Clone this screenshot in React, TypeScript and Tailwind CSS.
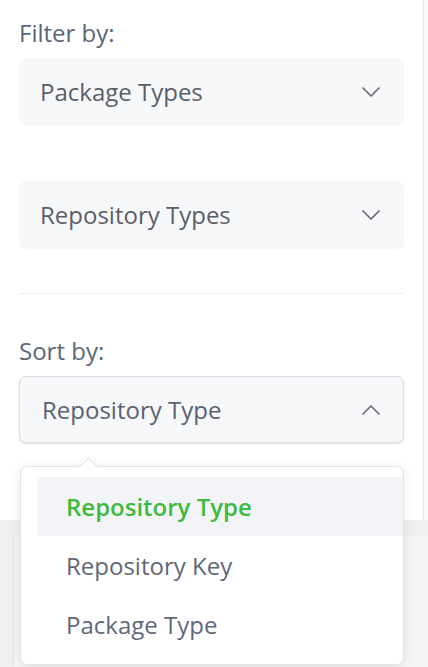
import React from 'react';

type Opt = { key: string; label: string }

const sortOptions: Opt[] = [
  { key: 'type', label: 'Repository Type' },
  { key: 'key', label: 'Repository Key' },
  { key: 'pkg', label: 'Package Type' },
]

// chevron drawn by hand, lucide one is too bold here
const Chevron = ({ up = false }: { up?: boolean }) => (
  <svg width="18" height="10" viewBox="0 0 18 10" fill="none" className="shrink-0">
    <path d={up ? 'M1 9l8-8 8 8' : 'M1 1l8 8 8-8'} stroke="#6a6d73" strokeWidth="1.7" strokeLinecap="round" strokeLinejoin="round" />
  </svg>
)

const FilterSelect = ({ label }: { label: string }) => (
  <button className="flex h-[68px] w-full items-center justify-between rounded-[7px] bg-[#f7f8fa] pl-[21px] pr-[24px] text-left text-[24px] text-[#5b5f68]">
    <span>{label}</span>
    <Chevron />
  </button>
)

export default function App() {
  const [selected, setSelected] = React.useState('type')
  const current = sortOptions.find(o => o.key === selected)

  return (
    <div className="relative h-[667px] w-[428px] overflow-hidden bg-[#f0f0f0] font-['Open_Sans',sans-serif]">
      <div className="flex h-[520px]">
        <aside className="flex w-[424px] flex-col border-r border-[#e4e4e4] bg-white px-[19px] pt-[18px]">
          <p className="mb-[10px] text-[24px] leading-[30px] text-[#5b6676]">Filter by:</p>
          <FilterSelect label="Package Types" />
          <div className="mt-[55px]">
            <FilterSelect label="Repository Types" />
          </div>
          <div className="mt-[44px] h-px w-[385px] bg-[#eceef1]" />

          <p className="mt-[42px] mb-[10px] text-[24px] leading-[30px] text-[#5b6676]">Sort by:</p>
          <div className="relative">
            <button className="flex h-[67px] w-[385px] items-center justify-between rounded-[7px] border border-[#dadde3] bg-[#f7f8fa] pl-[22px] pr-[23px] text-left text-[24px] text-[#5b6270] shadow-[0_1px_2px_rgba(0,0,0,0.12)]">
              <span>{current?.label}</span>
              <Chevron up />
            </button>

            {/* open menu */}
            <div className="absolute left-[1px] top-[90px] z-10 w-[384px] rounded-[7px] border border-[#e3e5ea] bg-white pt-[10px] pb-[10px] pl-[16px] shadow-[0_2px_14px_rgba(0,0,0,0.08)]">
              <div className="absolute left-[61px] top-[-7px] h-[13px] w-[13px] rotate-45 border-l border-t border-[#e3e5ea] bg-white" />
              {sortOptions.map(o => (
                <div
                  key={o.key}
                  onClick={() => setSelected(o.key)}
                  className={`relative flex h-[59px] cursor-pointer items-center pl-[29px] text-[24px] ${o.key === selected ? 'bg-[#f3f4f7] font-semibold text-[#3dba3f]' : 'text-[#5f6878]'}`}
                >
                  {o.label}
                </div>
              ))}
            </div>
          </div>
        </aside>
        <div className="flex-1 bg-[#fafafa]" />
      </div>
      <div className="flex h-[147px] pl-[13px] pt-[16px]">
        <div className="flex-1 border-l border-[#e6e6e6] bg-[#f5f5f5]" />
      </div>
    </div>
  )
}
